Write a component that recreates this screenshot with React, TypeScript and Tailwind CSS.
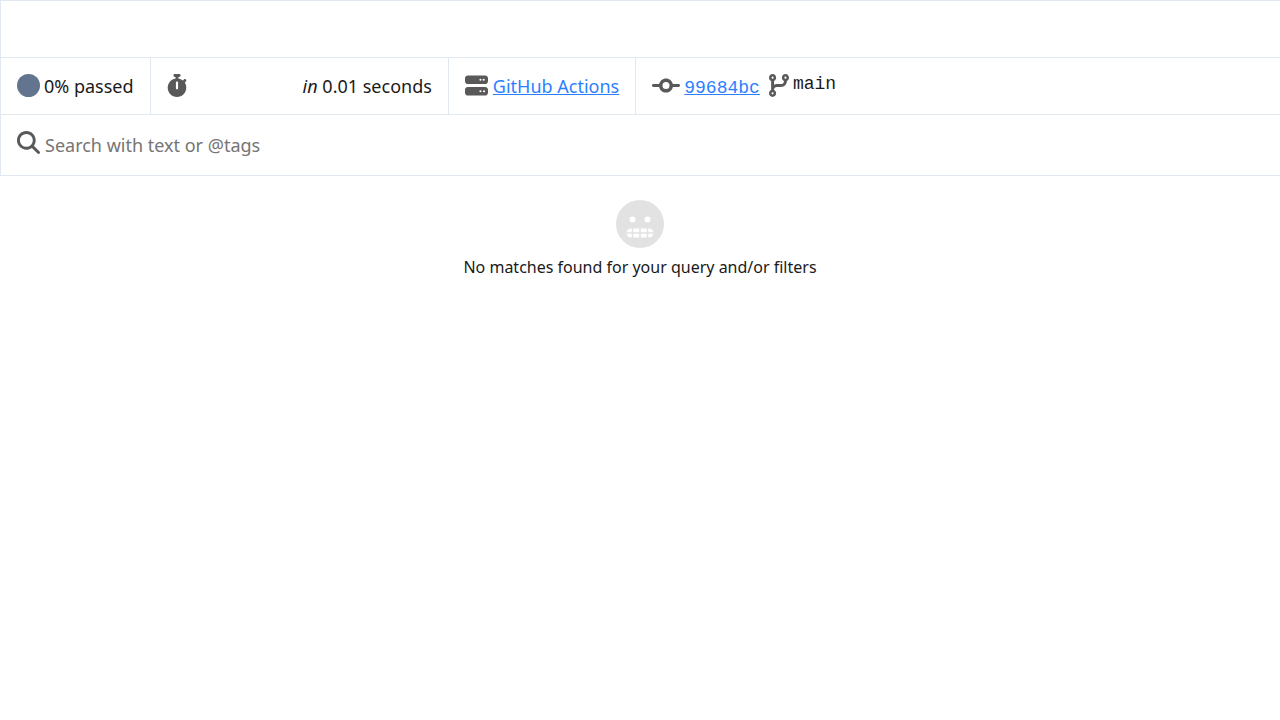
import { FaCircle, FaStopwatch, FaServer, FaCodeCommit, FaCodeBranch, FaMagnifyingGlass, FaFaceGrimace } from "react-icons/fa6";

const cell = "flex items-center border-r border-slate-200 px-4";

export default function App() {
  return (
    <div className="font-['Noto_Sans',sans-serif] text-lg text-[#1a1a1a]">
      <header className="border-t border-l border-slate-200">
        <div className="h-[57px] border-b border-slate-200" />
        <div className="flex h-[57px] border-b border-slate-200">
          <div className={cell}>
            <FaCircle className="mr-1 mb-0.5 size-[23px] text-slate-500" />
            <span>0% passed</span>
          </div>
          <div className={cell}>
            <FaStopwatch className="mr-29 mb-0.5 h-[23px] w-5 text-[#595959]" />
            <span><em>in</em> 0.01 seconds</span>
          </div>
          <div className={cell}>
            <FaServer className="mr-[5px] mb-0.5 size-[23px] text-[#595959]" />
            <a href="#actions" className="text-blue-500 underline">GitHub Actions</a>
          </div>
          <div className="flex items-center px-4">
            <FaCodeCommit className="mr-1 mb-0.5 h-[23px] w-7 text-[#595959]" />
            <a href="#commit" className="pt-1 font-['Liberation_Mono',monospace] text-blue-500 underline">99684bc</a>
            <FaCodeBranch className="mr-1 mb-0.5 ml-[9px] h-[23px] w-5 text-[#595959]" />
            <span className="pb-1 font-['Liberation_Mono',monospace]">main</span>
          </div>
        </div>
        <label className="flex h-[61px] items-center gap-[5px] border-b border-slate-200 px-4">
          <FaMagnifyingGlass className="mb-1.5 size-[23px] text-[#595959]" />
          <input type="search" aria-label="Search" placeholder="Search with text or @tags" className="min-w-0 flex-1 outline-none placeholder:text-[#757575]" />
        </label>
      </header>
      <main className="flex flex-col items-center pt-6 text-base">
        <FaFaceGrimace className="size-12 text-[#e2e2e2]" />
        <p className="mt-[7px]">No matches found for your query and/or filters</p>
      </main>
    </div>
  );
}
